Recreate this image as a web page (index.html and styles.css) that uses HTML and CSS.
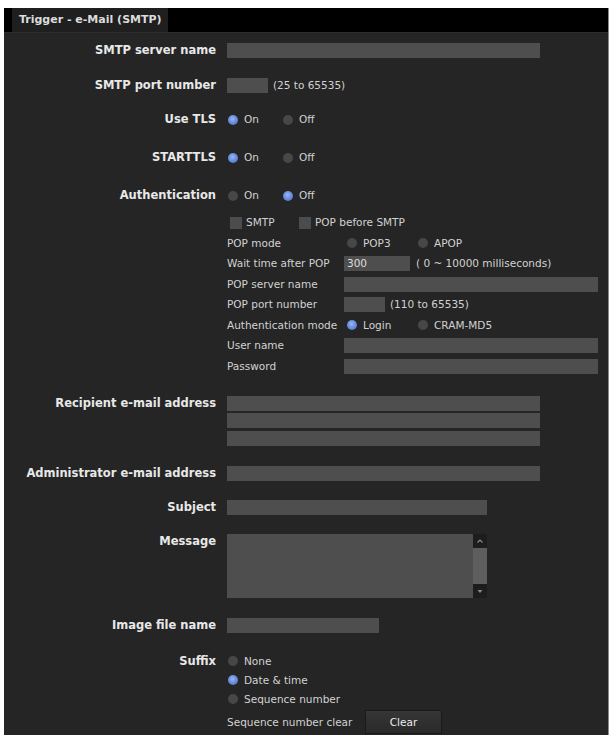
FILE: index.html
```html
<!DOCTYPE html>
<html>
<head>
<meta charset="utf-8">
<title>Trigger - e-Mail (SMTP)</title>
<link rel="stylesheet" href="styles.css">
</head>
<body>
<div class="frame">
  <div class="tabbar"><div class="tab">Trigger - e-Mail (SMTP)</div></div>
  <div class="form">
    <div class="row mb20">
      <div class="lbl">SMTP server name</div>
      <div class="ctl"><input class="txt w313" type="text"></div>
    </div>
    <div class="row mb19">
      <div class="lbl">SMTP port number</div>
      <div class="ctl"><input class="txt w41" type="text"><span class="note ml5">(25 to 65535)</span></div>
    </div>
    <div class="row mb23">
      <div class="lbl">Use TLS</div>
      <div class="ctl">
        <label class="opt"><input type="radio" name="tls" class="rd" checked><span>On</span></label>
        <label class="opt"><input type="radio" name="tls" class="rd"><span>Off</span></label>
      </div>
    </div>
    <div class="row mb23">
      <div class="lbl">STARTTLS</div>
      <div class="ctl">
        <label class="opt"><input type="radio" name="stls" class="rd" checked><span>On</span></label>
        <label class="opt"><input type="radio" name="stls" class="rd"><span>Off</span></label>
      </div>
    </div>
    <div class="row mb12">
      <div class="lbl">Authentication</div>
      <div class="ctl">
        <label class="opt"><input type="radio" name="auth" class="rd"><span>On</span></label>
        <label class="opt"><input type="radio" name="auth" class="rd" checked><span>Off</span></label>
      </div>
    </div>
    <div class="row mb22">
      <div class="lbl"></div>
      <div class="sub">
        <div class="subrow span2">
          <label class="chk first"><input type="checkbox" class="cb"><span>SMTP</span></label>
          <label class="chk"><input type="checkbox" class="cb"><span>POP before SMTP</span></label>
        </div>
        <div class="slbl">POP mode</div>
        <div class="subrow">
          <label class="opt2"><input type="radio" name="pop" class="rd"><span>POP3</span></label>
          <label class="opt2"><input type="radio" name="pop" class="rd"><span>APOP</span></label>
        </div>
        <div class="slbl">Wait time after POP</div>
        <div class="subrow"><input class="txt w66" type="text" value="300"><span class="note ml6">( 0 ~ 10000 milliseconds)</span></div>
        <div class="slbl">POP server name</div>
        <div class="subrow"><input class="txt w254" type="text"></div>
        <div class="slbl">POP port number</div>
        <div class="subrow"><input class="txt w41" type="text"><span class="note ml5">(110 to 65535)</span></div>
        <div class="slbl">Authentication mode</div>
        <div class="subrow">
          <label class="opt2"><input type="radio" name="am" class="rd" checked><span>Login</span></label>
          <label class="opt2"><input type="radio" name="am" class="rd"><span>CRAM-MD5</span></label>
        </div>
        <div class="slbl">User name</div>
        <div class="subrow"><input class="txt w254" type="text"></div>
        <div class="slbl">Password</div>
        <div class="subrow"><input class="txt w254" type="password"></div>
      </div>
    </div>
    <div class="row mb20">
      <div class="lbl">Recipient e-mail address</div>
      <div class="ctl stack">
        <input class="txt w313" type="text">
        <input class="txt w313" type="text">
        <input class="txt w313" type="text">
      </div>
    </div>
    <div class="row mb19">
      <div class="lbl">Administrator e-mail address</div>
      <div class="ctl"><input class="txt w313" type="text"></div>
    </div>
    <div class="row mb19">
      <div class="lbl">Subject</div>
      <div class="ctl"><input class="txt w260" type="text"></div>
    </div>
    <div class="row mb20">
      <div class="lbl">Message</div>
      <div class="ctl">
        <div class="msg">
          <textarea class="area"></textarea>
          <div class="sbar">
            <div class="sbtn"><svg width="8" height="8" viewBox="0 0 8 8"><path d="M1.5 5.5 L4 3 L6.5 5.5" fill="none" stroke="#8a8a8a" stroke-width="1.2"/></svg></div>
            <div class="strack"></div>
            <div class="sbtn"><svg width="8" height="8" viewBox="0 0 8 8"><path d="M1.5 3 L6.5 3 L4 6 Z" fill="#8a8a8a"/></svg></div>
          </div>
        </div>
      </div>
    </div>
    <div class="row mb19">
      <div class="lbl">Image file name</div>
      <div class="ctl"><input class="txt w152" type="text"></div>
    </div>
    <div class="row mb1">
      <div class="lbl tall">Suffix</div>
      <div class="ctl col">
        <label class="opt line"><input type="radio" name="sfx" class="rd"><span>None</span></label>
        <label class="opt line"><input type="radio" name="sfx" class="rd" checked><span>Date &amp; time</span></label>
        <label class="opt line"><input type="radio" name="sfx" class="rd"><span>Sequence number</span></label>
      </div>
    </div>
    <div class="row">
      <div class="lbl"></div>
      <div class="ctl clearrow">
        <span class="note seqlbl">Sequence number clear</span>
        <button class="btn" type="button">Clear</button>
      </div>
    </div>
  </div>
</div>
</body>
</html>
```

FILE: styles.css
```css
html, body {
  margin: 0;
  padding: 0;
  background: #ffffff;
}

body {
  font-family: "DejaVu Sans", "Noto Sans", sans-serif;
  color: #d2d2d2;
}

.frame {
  margin: 8px 0 0 4px;
  width: 604px;
  height: 727px;
  background: #252525;
  border-right: 1px solid #8a8a8a;
  overflow: hidden;
}

.tabbar {
  height: 24px;
  background: #000000;
  padding-left: 8px;
  display: flex;
}

.tab {
  width: 149px;
  padding-left: 7px;
  background: #1f1f1f;
  color: #dcdcdc;
  font-weight: bold;
  font-size: 11px;
  line-height: 24px;
  white-space: nowrap;
}

.form {
  padding-top: 10px;
  border-top: 1px solid #2d2d2d;
  margin-top: 0;
}

.row {
  display: grid;
  grid-template-columns: 212px 1fr;
  column-gap: 11px;
  align-items: start;
}

.mb1 { margin-bottom: 1px; }
.mb12 { margin-bottom: 12px; }
.mb19 { margin-bottom: 19px; }
.mb20 { margin-bottom: 20px; }
.mb22 { margin-bottom: 22px; }
.mb23 { margin-bottom: 23px; }

.lbl {
  text-align: right;
  font-weight: bold;
  font-size: 11.5px;
  line-height: 15px;
  color: #e8e8e8;
  white-space: nowrap;
}

.lbl.tall {
  line-height: 19px;
}

.ctl {
  display: flex;
  align-items: center;
  min-height: 15px;
}

.ctl.stack {
  flex-direction: column;
  align-items: flex-start;
  gap: 2.5px;
}

.ctl.col {
  flex-direction: column;
  align-items: flex-start;
}

.txt {
  box-sizing: border-box;
  height: 15px;
  border: none;
  outline: none;
  margin: 0;
  padding: 0 3px;
  background: #4e4e4e;
  color: #dedede;
  font-family: "DejaVu Sans", sans-serif;
  font-size: 10.5px;
  line-height: 15px;
}

.w41 { width: 41px; }
.w66 { width: 66px; }
.w152 { width: 152px; }
.w254 { width: 254px; }
.w260 { width: 260px; }
.w313 { width: 313px; }

.note {
  font-size: 10.5px;
  line-height: 15px;
  color: #d2d2d2;
  white-space: nowrap;
}

.ml5 { margin-left: 5px; }
.ml6 { margin-left: 6px; }

.opt, .opt2, .chk {
  display: flex;
  align-items: center;
  font-size: 10.5px;
  line-height: 15px;
  color: #d2d2d2;
  white-space: nowrap;
}

.opt {
  width: 55px;
}

.opt.line {
  width: auto;
  height: 19px;
}

.opt2 {
  width: 71px;
}

.rd {
  -webkit-appearance: none;
  appearance: none;
  width: 10px;
  height: 10px;
  margin: 0 6px 0 1px;
  border-radius: 50%;
  background: #474747;
  flex: none;
}

.opt2 .rd {
  margin-left: 3px;
  margin-right: 6px;
}

.rd:checked {
  background: radial-gradient(circle at 45% 40%, #9cb8f0 0%, #6a8fe0 45%, #4a6cc4 100%);
}

.cb {
  -webkit-appearance: none;
  appearance: none;
  width: 12px;
  height: 12px;
  margin: 0 4px 0 3px;
  background: #4c4c4c;
  flex: none;
}

.chk.first {
  width: 69px;
}

.sub {
  display: grid;
  grid-template-columns: 117px 1fr;
  row-gap: 5.5px;
  align-items: center;
}

.span2 {
  grid-column: 1 / span 2;
}

.subrow {
  display: flex;
  align-items: center;
  height: 15px;
}

.slbl {
  font-size: 10.5px;
  line-height: 15px;
  color: #d2d2d2;
  white-space: nowrap;
}

.msg {
  display: flex;
  width: 260px;
  height: 64px;
  background: #4e4e4e;
}

.area {
  flex: 1;
  border: none;
  outline: none;
  resize: none;
  margin: 0;
  padding: 2px 3px;
  background: #4e4e4e;
  color: #dedede;
  font-family: "DejaVu Sans", sans-serif;
  font-size: 10.5px;
}

.sbar {
  width: 14px;
  display: flex;
  flex-direction: column;
  background: #5e5e5e;
}

.sbtn {
  width: 14px;
  height: 14px;
  background: #1d1d1d;
  display: flex;
  align-items: center;
  justify-content: center;
}

.strack {
  flex: 1;
}

.clearrow {
  padding-top: 0;
}

.seqlbl {
  width: 138px;
  line-height: 24px;
}

.btn {
  width: 77px;
  height: 24px;
  margin: 0;
  padding: 0;
  border: 1px solid #1a1a1a;
  background: linear-gradient(#363636, #2a2a2a);
  color: #ececec;
  font-family: "DejaVu Sans", sans-serif;
  font-size: 10.5px;
}
```
